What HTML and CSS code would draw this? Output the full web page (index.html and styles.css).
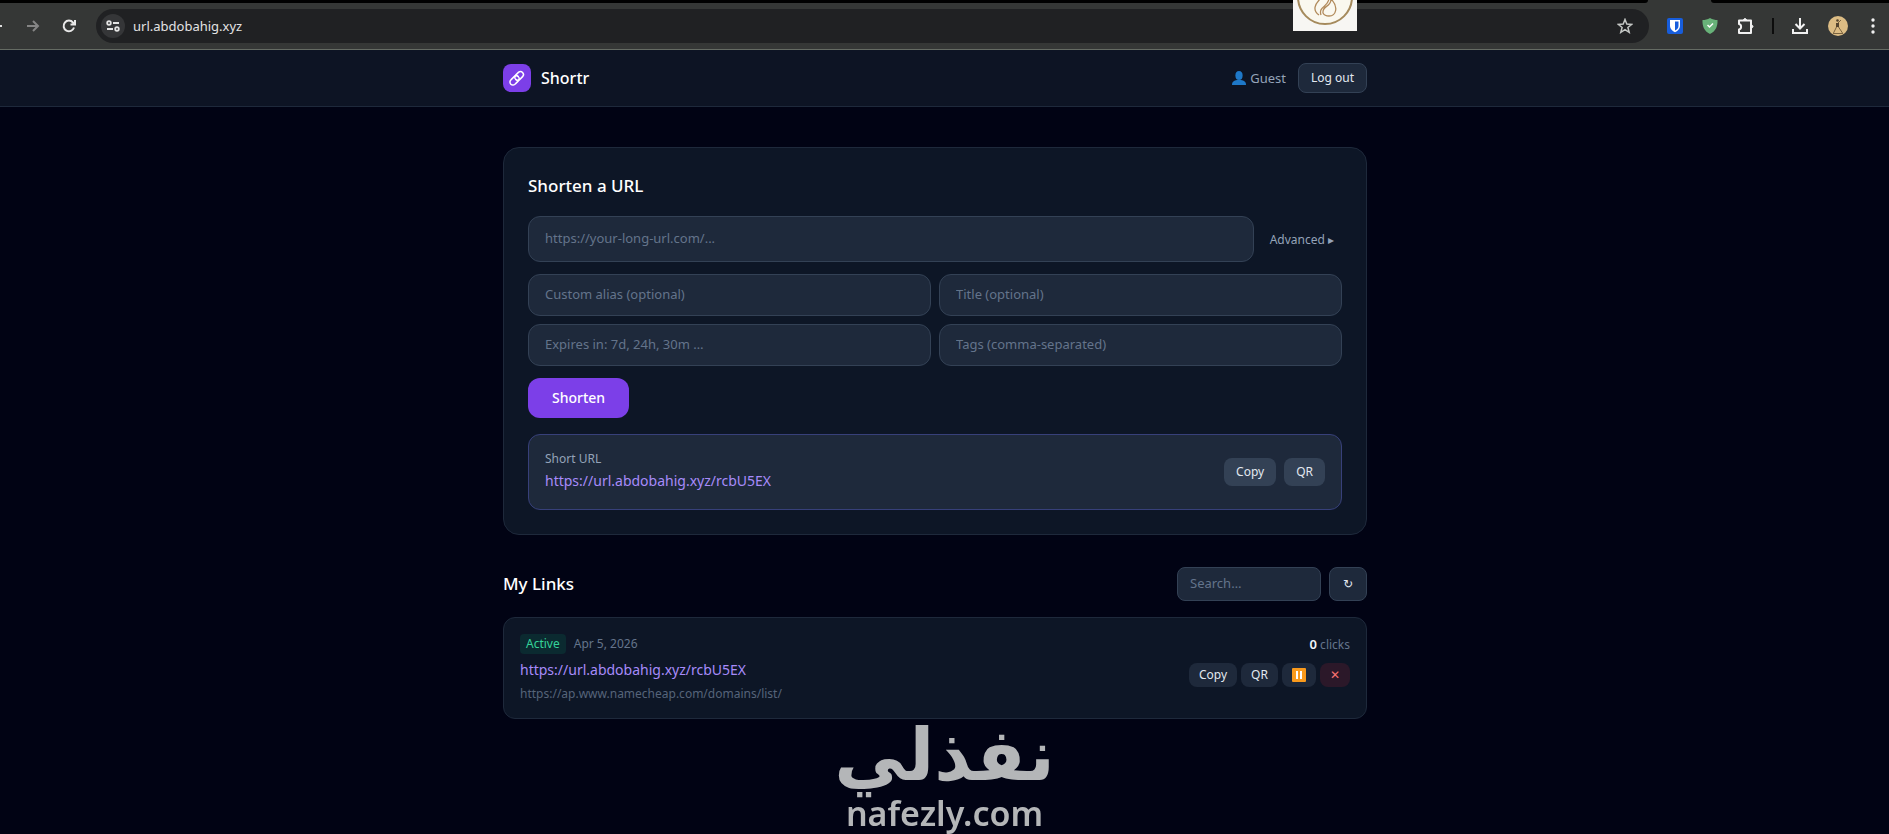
FILE: index.html
```html
<!DOCTYPE html>
<html lang="en">
<head>
<meta charset="UTF-8">
<meta name="viewport" content="width=device-width, initial-scale=1.0">
<title>Shortr</title>
<link rel="stylesheet" href="styles.css">
</head>
<body>
<!-- browser bar -->
<div class="browser">
    <div class="tabs"><span class="tab-left"></span><span class="tab-right"></span></div>
    <div class="toolbar">
        <button class="nav-btn back" aria-label="Back"><svg width="16" height="16" viewBox="0 0 16 16" fill="none" stroke="#dedede" stroke-width="2"><path d="M15 8H2M8 2L2 8l6 6"/></svg></button>
        <button class="nav-btn" aria-label="Forward"><svg width="14" height="14" viewBox="0 0 14 14" fill="none" stroke="#858585" stroke-width="2"><path d="M1 7h11M7 2l5 5-5 5"/></svg></button>
        <button class="nav-btn reload" aria-label="Reload"><svg width="14" height="14" viewBox="0 0 14 14" fill="none" stroke="#e8e8e8" stroke-width="2"><path d="M12 8.500A5.300 5.300 0 1 1 11 3.500L12.500 5M13 1v4.500H8.500"/></svg></button>
        <div class="omnibox">
            <span class="site-info"><svg width="14" height="14" viewBox="0 0 14 14" fill="none" stroke="#e3e3e3" stroke-width="1.800"><circle cx="3" cy="4" r="1.800"/><path d="M7 4h6M1 10h6"/><circle cx="11" cy="10" r="1.800"/></svg></span>
            <input class="address" type="text" aria-label="Address" value="url.abdobahig.xyz">
            <svg width="16" height="16" viewBox="0 0 16 16" fill="none" stroke="#c4c7c5" stroke-width="1.500"><path d="M8 1.500l1.800 4.600 4.900.3-3.800 3.100 1.300 4.800L8 11.600l-4.200 2.700 1.300-4.800-3.800-3.100 4.900-.3z"/></svg>
        </div>
        <div class="extensions">
            <svg width="16" height="16" viewBox="0 0 16 16"><rect width="16" height="16" rx="2" fill="#175ddc"/><path d="M3 2h10v6c0 3-2.500 5-5 6.300C5.500 13 3 11 3 8z" fill="#fff"/><path d="M8 3.500h3.500V8c0 2-1.500 3.500-3.500 4.600z" fill="#175ddc"/></svg>
            <svg width="16" height="16" viewBox="0 0 16 16"><path d="M8 0c2.500 1.400 5 2 7.500 2 .3 6-1.500 11-7.500 14C2 13 .2 8 .5 2 3 2 5.500 1.400 8 0z" fill="#68b279"/><path d="M5.500 7l2 2L11 5.500" fill="none" stroke="#fff" stroke-width="1.500"/></svg>
            <svg width="18" height="18" viewBox="0 0 18 18" fill="none" stroke="#f1f1f1" stroke-width="2" stroke-linejoin="round"><path d="M2 3.500h12V16H2v-3.500c2.800-.4 2.800-5 0-5.400z"/><path d="M6.500 3c.3-2 2.700-2 3 0zM14.500 8c2 .3 2 2.700 0 3z" fill="#f1f1f1" stroke-width="1"/></svg>
            <span class="divider"></span>
            <svg width="18" height="18" viewBox="0 0 18 18" fill="none" stroke="#f1f1f1" stroke-width="2"><path d="M9 1v10M4.500 7L9 11.500 13.500 7M2 12v4h14v-4"/></svg>
            <svg width="20" height="20" viewBox="0 0 20 20"><circle cx="10" cy="10" r="10" fill="#dcbc84"/><circle cx="9.500" cy="4.500" r="1.300" fill="#55452f"/><path d="M9.500 7v4" stroke="#55452f" stroke-width="3"/><path d="M10 7l3-3M8.500 11l-3 6M10.500 11l4 6M5 17.500h10" fill="none" stroke="#7a6340"/></svg>
            <svg class="menu-dots" width="4" height="16" viewBox="0 0 4 16" fill="#f1f1f1"><circle cx="2" cy="2" r="1.700"/><circle cx="2" cy="8" r="1.700"/><circle cx="2" cy="14" r="1.700"/></svg>
        </div>
    </div>
    <div class="stamp">
        <svg width="64" height="31" viewBox="0 0 64 31" fill="none"><rect width="64" height="31" fill="#f7f6f3"/><circle cx="32" cy="-3" r="27" fill="#faf8ef" stroke="#a58a5c" stroke-width="2"/><path d="M26 15c-7-5-4-11 2-17M28 15c-3-9 8-8 8-17M30 13c-1-8 8-5 8-14 8 8 5 17-2 17-3 0-5-1-6-3z" stroke="#b18a5b" stroke-width="1.300"/></svg>
    </div>
</div>

<header class="header">
    <div class="container header-inner">
        <a class="brand" href="#">
            <span class="brand-icon"><svg width="18" height="18" viewBox="0 0 24 24" fill="none" stroke="#fff" stroke-width="2" stroke-linecap="round" stroke-linejoin="round"><path d="M13.800 10.200a4 4 0 0 0-5.600 0l-4 4a4 4 0 1 0 5.600 5.600l4-4a4 4 0 0 0 .8-4.500"/><path d="M10.200 13.800a4 4 0 0 0 5.600 0l4-4a4 4 0 0 0-5.600-5.600l-4 4a4 4 0 0 0-.8 4.500"/></svg></span>
            Shortr
        </a>
        <div class="user">
            <svg width="14" height="14" viewBox="0 0 14 14" fill="#1e78c8"><ellipse cx="7" cy="4.500" rx="3.600" ry="4.500"/><path d="M0 14c0-3.500 2-4.500 5-5h4c3 .5 5 1.500 5 5z"/></svg>
            <span class="user-name">Guest</span>
            <button class="btn btn-outline">Log out</button>
        </div>
    </div>
</header>

<main class="main">
    <div class="container">
        <section class="card">
            <h2>Shorten a URL</h2>
            <form>
                <div class="url-row">
                    <input class="input input-url" type="text" aria-label="Long URL" placeholder="https://your-long-url.com/...">
                    <button class="advanced" type="button">Advanced ▸</button>
                </div>
                <div class="options">
                    <input class="input" type="text" aria-label="Custom alias" placeholder="Custom alias (optional)">
                    <input class="input" type="text" aria-label="Title" placeholder="Title (optional)">
                    <input class="input" type="text" aria-label="Expires in" placeholder="Expires in: 7d, 24h, 30m …">
                    <input class="input" type="text" aria-label="Tags" placeholder="Tags (comma-separated)">
                </div>
                <button class="btn-primary" type="button">Shorten</button>
            </form>
            <div class="result">
                <div>
                    <p class="result-label">Short URL</p>
                    <a class="short-link" href="#">https://url.abdobahig.xyz/rcbU5EX</a>
                </div>
                <div class="result-actions">
                    <button class="btn">Copy</button>
                    <button class="btn">QR</button>
                </div>
            </div>
        </section>

        <section>
            <div class="links-head">
                <h2>My Links</h2>
                <input class="input search" type="text" aria-label="Search links" placeholder="Search…">
                <button class="btn btn-outline refresh" aria-label="Refresh">↻</button>
            </div>
            <article class="link-card">
                <div>
                    <div class="meta"><span class="badge">Active</span><span class="date">Apr 5, 2026</span></div>
                    <a class="short-link" href="#">https://url.abdobahig.xyz/rcbU5EX</a>
                    <p class="target">https://ap.www.namecheap.com/domains/list/</p>
                </div>
                <div>
                    <p class="clicks"><strong>0</strong> clicks</p>
                    <div class="link-actions">
                        <button class="btn-small">Copy</button>
                        <button class="btn-small">QR</button>
                        <button class="btn-small" aria-label="Pause"><svg width="14" height="14" viewBox="0 0 14 14"><rect width="14" height="14" rx="1" fill="#fa9a1c"/><path d="M4 3h2v8H4zM8 3h2v8H8z" fill="#fff"/></svg></button>
                        <button class="btn-small btn-delete" aria-label="Delete">✕</button>
                    </div>
                </div>
            </article>
        </section>
    </div>
</main>

<div class="watermark">
    <span class="watermark-ar" lang="ar" dir="rtl">نفذلي</span>
    <span class="watermark-en">nafezly.com</span>
</div>
</body>
</html>
```
FILE: styles.css
```css
* {
    box-sizing: border-box;
}
body {
    margin: 0;
    min-height: 100vh;
    background-color: #010314;
    color: #f1f5f9;
    font-family: "Noto Sans", "DejaVu Sans", sans-serif;
    font-size: 13px;
    line-height: 20px;
}
h2, p {
    margin: 0;
}
h2 {
    font-size: 17px;
    line-height: 28px;
    font-weight: 500;
    color: #fff;
}
a {
    text-decoration: none;
}
button, input {
    font-family: inherit;
    margin: 0;
}
button {
    border: none;
    cursor: pointer;
}
svg {
    display: block;
    flex: none;
}

/* browser bar */
.browser {
    position: relative;
    background-color: #353736;
    border-bottom: 1px solid #656b63;
}
.tabs {
    display: flex;
    height: 3px;
}
.tab-left {
    flex: 1;
    margin-right: 63px;
    background-color: #000;
    border-bottom-right-radius: 3px;
}
.tab-right {
    width: 178px;
    background-color: #000;
    border-bottom-left-radius: 3px;
}
.toolbar {
    display: flex;
    align-items: center;
    height: 46px;
    padding-right: 14px;
}
.nav-btn {
    padding: 0;
    background: none;
}
.back {
    display: flex;
    justify-content: flex-end;
    width: 3px;
    margin-right: 23px;
    overflow: hidden;
}
.reload {
    margin: 0 20px 0 22px;
}
.omnibox {
    flex: 1;
    display: flex;
    align-items: center;
    height: 34px;
    padding: 0 16px 0 5px;
    border-radius: 17px;
    background-color: #202123;
}
.site-info {
    display: flex;
    align-items: center;
    justify-content: center;
    width: 24px;
    height: 24px;
    border-radius: 50%;
    background-color: #353638;
}
.address {
    flex: 1;
    padding: 0 8px;
    border: none;
    outline: none;
    background: none;
    color: #e3e3e3;
    font-size: 13px;
}
.extensions {
    display: flex;
    align-items: center;
    gap: 19px;
    margin-left: 18px;
}
.divider {
    width: 2px;
    height: 16px;
    margin: 0 -2px;
    background-color: #0c0c0c;
}
.menu-dots {
    margin-left: 4px;
}
.stamp {
    position: absolute;
    top: 0;
    right: 532px;
}

/* app */
.header, .main {
    padding-right: 19px;
}
.container {
    max-width: 896px;
    margin: 0 auto;
    padding: 0 16px;
}
.header {
    background-color: #0d1424;
    border-bottom: 1px solid #1e293b;
}
.header-inner {
    display: flex;
    align-items: center;
    justify-content: space-between;
    height: 56px;
}
.main {
    padding-top: 40px;
}
.brand {
    display: flex;
    align-items: center;
    gap: 10px;
    color: #fff;
    font-size: 16px;
    font-weight: 500;
}
.brand-icon {
    display: flex;
    align-items: center;
    justify-content: center;
    width: 28px;
    height: 28px;
    border-radius: 8px;
    background-color: #7c3fe8;
}
.user {
    display: flex;
    align-items: center;
}
.user-name {
    margin: 0 12px 0 4px;
    color: #94a3b8;
}
.btn {
    padding: 6px 12px;
    border-radius: 8px;
    background-color: #334155;
    color: #e2e8f0;
    font-size: 12px;
    line-height: 16px;
}
.btn-outline {
    border: 1px solid #334155;
    background-color: #1e293b;
}
.card {
    margin-bottom: 32px;
    padding: 24px;
    border: 1px solid #1e293b;
    border-radius: 16px;
    background-color: #0d1626;
}
.card h2 {
    margin-bottom: 16px;
}
.input {
    width: 100%;
    height: 42px;
    padding: 0 16px 2px;
    border: 1px solid #334155;
    border-radius: 12px;
    outline: none;
    background-color: #1e293b;
    color: #f1f5f9;
    font-size: 13px;
}
.input::placeholder {
    color: #64748b;
}
.url-row {
    display: flex;
    gap: 8px;
    margin-bottom: 12px;
}
.input-url {
    flex: 1;
    height: 46px;
}
.advanced {
    padding: 0 8px;
    background: none;
    color: #94a3b8;
    font-size: 12px;
    white-space: nowrap;
}
.options {
    display: grid;
    grid-template-columns: 1fr 1fr;
    gap: 8px;
    margin-bottom: 12px;
}
.btn-primary {
    display: block;
    padding: 10px 24px;
    border-radius: 12px;
    background-color: #7c3fe8;
    color: #fff;
    font-size: 14px;
    line-height: 20px;
    font-weight: 500;
}
.result {
    display: flex;
    align-items: center;
    justify-content: space-between;
    margin-top: 16px;
    padding: 16px;
    border: 1px solid #37407a;
    border-radius: 12px;
    background-color: #1e293b;
}
.result-label {
    margin-bottom: 2px;
    color: #94a3b8;
    font-size: 12px;
    line-height: 16px;
}
.short-link {
    display: block;
    color: #a78bfa;
    font-size: 14px;
    line-height: 24px;
}
.result-actions {
    display: flex;
    gap: 8px;
}
.links-head {
    display: flex;
    align-items: center;
    gap: 8px;
    margin-bottom: 16px;
}
.links-head h2 {
    flex: 1;
}
.search {
    width: 144px;
    height: 34px;
    padding: 0 12px 2px;
    border-radius: 8px;
}
.refresh {
    width: 38px;
    height: 34px;
}
.link-card {
    display: flex;
    justify-content: space-between;
    padding: 16px;
    border: 1px solid #1e293b;
    border-radius: 12px;
    background-color: #0d1626;
}
.meta {
    display: flex;
    align-items: center;
    gap: 8px;
    margin-bottom: 4px;
    font-size: 12px;
}
.badge {
    padding: 0 6px;
    border-radius: 4px;
    background-color: #0b2a30;
    color: #34d399;
}
.date, .clicks {
    color: #64748b;
}
.target {
    margin-top: 4px;
    color: #56647a;
    font-size: 12px;
    line-height: 16px;
}
.clicks {
    margin-bottom: 8px;
    font-size: 12px;
    text-align: right;
}
.clicks strong {
    color: #f1f5f9;
    font-size: 13px;
    font-weight: 600;
}
.link-actions {
    display: flex;
    gap: 4px;
}
.btn-small {
    padding: 4px 10px;
    border-radius: 8px;
    background-color: #1e293b;
    color: #e2e8f0;
    font-size: 12px;
    line-height: 16px;
}
.btn-delete {
    background-color: #2b1829;
    color: #f87171;
}

/* watermark over the page */
.watermark {
    position: fixed;
    left: 50%;
    bottom: 3px;
    transform: translateX(-50%);
    display: flex;
    flex-direction: column;
    align-items: center;
    color: #b4b6b8;
}
.watermark-ar {
    font-family: "DejaVu Sans", sans-serif;
    font-size: 72px;
    line-height: 80px;
    font-weight: 700;
}
.watermark-en {
    font-size: 34px;
    line-height: 36px;
    font-weight: 600;
}
```
